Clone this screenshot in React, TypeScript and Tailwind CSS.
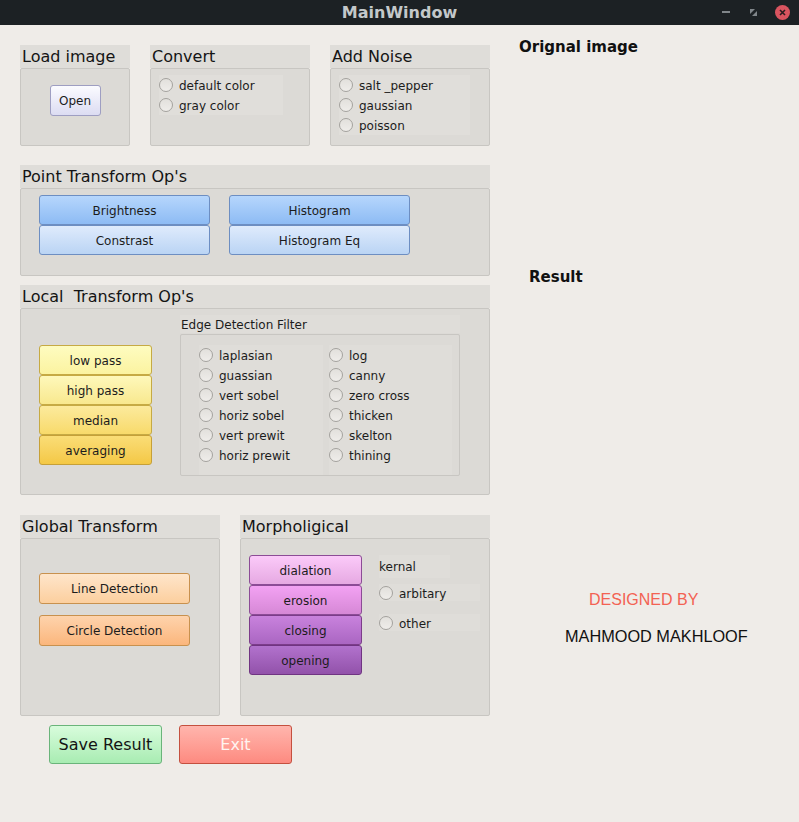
import type { ReactNode } from "react";

const FONT = { fontFamily: '"DejaVu Sans", Verdana, sans-serif' };

function Radio({ label }: { label: string }) {
  return (
    <div className="flex h-[20px] items-center gap-[6px]">
      <span className="h-[14px] w-[14px] shrink-0 rounded-full border border-[#a4a29e] bg-linear-to-b from-[#e2e0dc] to-[#efedea]" />
      <span className="mt-[2px] text-[12px] text-[#1c1c1c]">{label}</span>
    </div>
  );
}

function Group({
  title,
  className,
  innerClass,
  children,
}: {
  title: string;
  className: string;
  innerClass?: string;
  children?: ReactNode;
}) {
  return (
    <div className={`flex flex-col ${className}`}>
      <div className="h-[23px] shrink-0 bg-[#dfddd9] pl-[2px] text-[16px] leading-[23px] text-[#141414]">
        {title}
      </div>
      <div className={`flex-1 rounded-[2px] border border-[#c8c6c2] bg-[#dcdad6] ${innerClass ?? ""}`}>
        {children}
      </div>
    </div>
  );
}

function Btn({ label, className }: { label: string; className: string }) {
  return (
    <button
      className={`flex h-[30px] w-full items-center justify-center rounded-[3px] border bg-linear-to-b pt-[2px] text-[12px] text-[#1c1c1c] ${className}`}
    >
      {label}
    </button>
  );
}

export default function App() {
  return (
    <div className="h-[822px] w-[799px] overflow-hidden bg-[#efece8]" style={FONT}>
      {/* title bar */}
      <div className="relative flex h-[25px] items-center justify-center bg-[#1c2124]">
        <span className="text-[16px] font-bold text-[#c3c8ca]">MainWindow</span>
        <span className="absolute left-[722px] top-[11px] h-[2px] w-[8px] bg-[#80868a]" />
        <svg className="absolute left-[750px] top-[9px]" width="7" height="7" viewBox="0 0 7 7">
          <path d="M0 0H5L0 5Z" fill="#80868a" />
          <path d="M7 2V7H2Z" fill="#80868a" />
        </svg>
        <span className="absolute left-[775px] top-[5px] flex h-[15px] w-[15px] items-center justify-center rounded-full bg-[#d9545f]">
          <svg width="7" height="7" viewBox="0 0 7 7">
            <path d="M1 1L6 6M6 1L1 6" stroke="#2a1c1e" strokeWidth="1.6" />
          </svg>
        </span>
      </div>

      <div className="flex">
        {/* left column */}
        <div className="flex w-[490px] shrink-0 flex-col pl-[20px] pt-[20px]">
          <div className="flex h-[101px] gap-[20px]">
            <Group title="Load image" className="w-[110px]" innerClass="flex justify-center pt-[16px]">
              <button className="h-[31px] w-[51px] rounded-[3px] border border-[#9e9ec2] bg-linear-to-b from-[#fbfbff] to-[#dcdcf2] pt-[1px] text-[12px] text-[#1c1c1c]">
                Open
              </button>
            </Group>
            <Group title="Convert" className="w-[160px]" innerClass="pl-[8px] pt-[6px]">
              <div className="w-[124px] bg-[#e0deda]">
                <Radio label="default color" />
                <Radio label="gray color" />
              </div>
            </Group>
            <Group title="Add Noise" className="w-[160px]" innerClass="pl-[8px] pt-[6px]">
              <div className="w-[131px] bg-[#e0deda]">
                <Radio label="salt _pepper" />
                <Radio label="gaussian" />
                <Radio label="poisson" />
              </div>
            </Group>
          </div>

          <Group title="Point Transform Op's" className="mt-[19px] h-[111px]" innerClass="flex gap-[19px] pl-[18px] pt-[6px]">
            <div className="flex w-[171px] flex-col">
              <Btn label="Brightness" className="border-[#6d8ec2] from-[#b6d6fc] to-[#8dbbf4]" />
              <Btn label="Constrast" className="border-[#6d8ec2] from-[#dfebfc] to-[#bad4f4]" />
            </div>
            <div className="flex w-[181px] flex-col">
              <Btn label="Histogram" className="border-[#6d8ec2] from-[#b6d6fc] to-[#8dbbf4]" />
              <Btn label="Histogram Eq" className="border-[#6d8ec2] from-[#dfebfc] to-[#bad4f4]" />
            </div>
          </Group>

          <Group title="Local  Transform Op's" className="mt-[9px] h-[210px] whitespace-pre" innerClass="flex pl-[18px]">
            <div className="mt-[36px] flex w-[113px] flex-col">
              <Btn label="low pass" className="border-[#c6aa44] from-[#fefcc0] to-[#fbf3a0]" />
              <Btn label="high pass" className="border-[#c6aa44] from-[#fef8ba] to-[#f8e88e]" />
              <Btn label="median" className="border-[#c6aa44] from-[#fcea9c] to-[#f8da6a]" />
              <Btn label="averaging" className="border-[#c6a038] from-[#fadd76] to-[#f4c844]" />
            </div>
            <div className="ml-[28px] mt-[6px] flex w-[280px] flex-col">
              <div className="h-[18px] bg-[#dfddd9] pl-[1px] pt-[1px] text-[12px] leading-[18px] text-[#1c1c1c]">
                Edge Detection Filter
              </div>
              <div className="mt-[1px] flex h-[142px] gap-[6px] rounded-[2px] border border-[#c8c6c2] pl-[18px] pt-[10px]">
                <div className="w-[124px] bg-[#dfddd9]">
                  <Radio label="laplasian" />
                  <Radio label="guassian" />
                  <Radio label="vert sobel" />
                  <Radio label="horiz sobel" />
                  <Radio label="vert prewit" />
                  <Radio label="horiz prewit" />
                </div>
                <div className="w-[123px] bg-[#dfddd9]">
                  <Radio label="log" />
                  <Radio label="canny" />
                  <Radio label="zero cross" />
                  <Radio label="thicken" />
                  <Radio label="skelton" />
                  <Radio label="thining" />
                </div>
              </div>
            </div>
          </Group>

          <div className="mt-[20px] flex h-[201px] gap-[20px]">
            <Group title="Global Transform" className="w-[200px]" innerClass="flex flex-col gap-[11px] pl-[18px] pt-[34px]">
              <button className="h-[31px] w-[151px] rounded-[3px] border border-[#c8914e] bg-linear-to-b from-[#fee5ca] to-[#fccf9e] pt-[1px] text-[12px] text-[#1c1c1c]">
                Line Detection
              </button>
              <button className="h-[31px] w-[151px] rounded-[3px] border border-[#c8914e] bg-linear-to-b from-[#fed3ac] to-[#fbb67c] pt-[1px] text-[12px] text-[#1c1c1c]">
                Circle Detection
              </button>
            </Group>
            <Group title="Morpholigical" className="w-[250px]" innerClass="flex pl-[8px] pt-[16px]">
              <div className="flex w-[113px] flex-col">
                <Btn label="dialation" className="border-[#8c4c96] from-[#fbcaf9] to-[#e6a9e2]" />
                <Btn label="erosion" className="border-[#8c4c96] from-[#f3a2f3] to-[#d688d6]" />
                <Btn label="closing" className="border-[#7c3c8a] from-[#c982dd] to-[#aa66c2]" />
                <Btn label="opening" className="border-[#703482] from-[#b272cd] to-[#9252aa]" />
              </div>
              <div className="ml-[17px] flex flex-col">
                <div className="h-[23px] w-[71px] bg-[#dfddd9] pt-[1px] text-[12px] leading-[23px] text-[#1c1c1c]">kernal</div>
                <div className="mt-[6px] flex h-[17px] w-[101px] items-center bg-[#dfddd9]">
                  <Radio label="arbitary" />
                </div>
                <div className="mt-[13px] flex h-[17px] w-[101px] items-center bg-[#dfddd9]">
                  <Radio label="other" />
                </div>
              </div>
            </Group>
          </div>

          <div className="mt-[9px] flex gap-[17px] pl-[29px]">
            <button className="h-[39px] w-[113px] rounded-[3px] border border-[#6ab47a] bg-linear-to-b from-[#d8fcdc] to-[#a8ecb2] text-[16px] text-[#141414]">
              Save Result
            </button>
            <button className="h-[39px] w-[113px] rounded-[3px] border border-[#c4503f] bg-linear-to-b from-[#ffb5ad] to-[#fd8a80] text-[16px] text-[#fff3ef]">
              Exit
            </button>
          </div>
        </div>

        {/* right column */}
        <div className="flex flex-col">
          <div className="ml-[29px] mt-[12px] h-[20px] text-[15px] font-bold leading-[20px] text-[#111]">Orignal image</div>
          <div className="ml-[39px] mt-[210px] h-[20px] text-[15px] font-bold leading-[20px] text-[#111]">Result</div>
          <div
            className="ml-[99px] mt-[304px] h-[18px] text-[16px] leading-[18px] text-[#f36253]"
            style={{ fontFamily: '"Liberation Sans", Arial, sans-serif' }}
          >
            DESIGNED BY
          </div>
          <div
            className="ml-[75px] mt-[18px] h-[18px] whitespace-nowrap text-[16.3px] leading-[18px] text-[#111]"
            style={{ fontFamily: '"Liberation Sans", Arial, sans-serif' }}
          >
            MAHMOOD MAKHLOOF
          </div>
        </div>
      </div>
    </div>
  );
}
